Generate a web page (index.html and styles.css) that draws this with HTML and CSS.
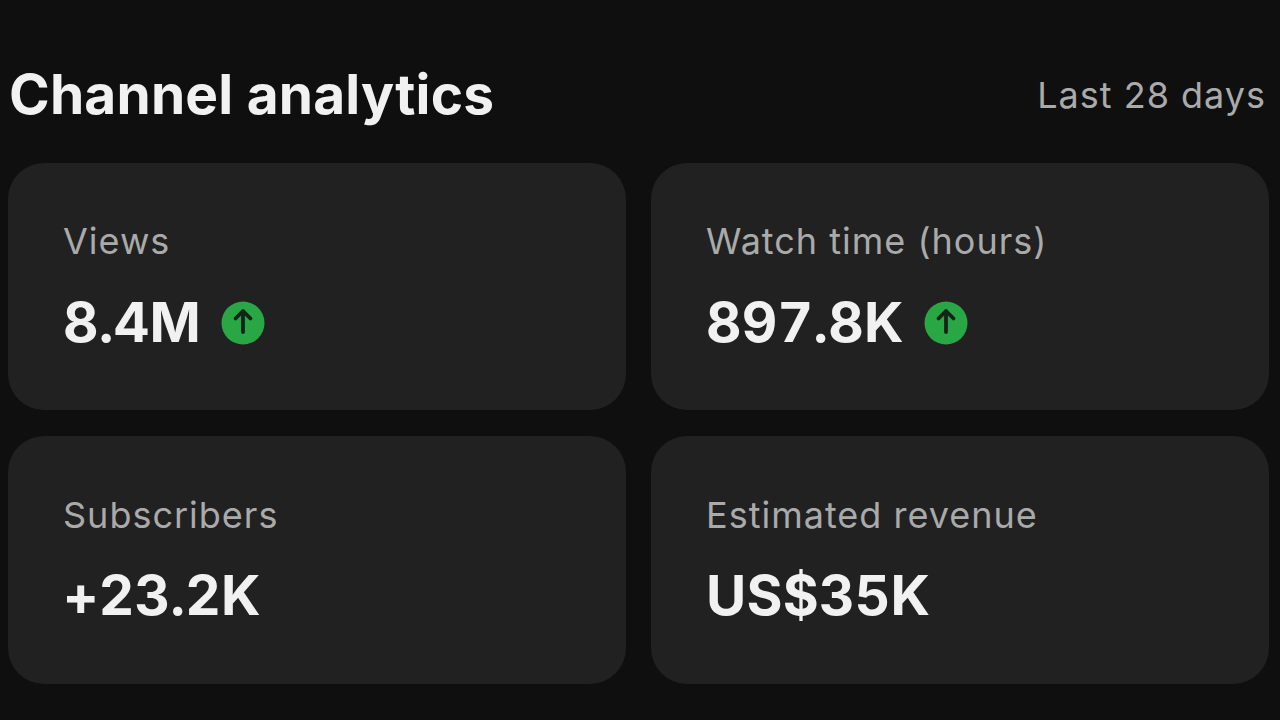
FILE: index.html
```html
<!DOCTYPE html>
<html lang="en">
<head>
    <meta charset="UTF-8">
    <title>Channel analytics</title>
    <link rel="stylesheet" href="styles.css">
</head>
<body>
    <header class="top">
        <h1>Channel analytics</h1>
        <span class="period">Last 28 days</span>
    </header>
    <main class="stats">
        <section class="card">
            <p class="label">Views</p>
            <div class="value">
                <span>8.4M</span>
                <svg class="trend" viewBox="0 0 44 44" aria-hidden="true">
                    <circle cx="22" cy="22" r="21.5" fill="#2aa745"/>
                    <path d="M22 31V10M14.5 17.5L22 10l7.5 7.5" fill="none" stroke="#14231a" stroke-width="3.8" stroke-linecap="round" stroke-linejoin="round"/>
                </svg>
            </div>
        </section>
        <section class="card">
            <p class="label">Watch time (hours)</p>
            <div class="value">
                <span>897.8K</span>
                <svg class="trend" viewBox="0 0 44 44" aria-hidden="true">
                    <circle cx="22" cy="22" r="21.5" fill="#2aa745"/>
                    <path d="M22 31V10M14.5 17.5L22 10l7.5 7.5" fill="none" stroke="#14231a" stroke-width="3.8" stroke-linecap="round" stroke-linejoin="round"/>
                </svg>
            </div>
        </section>
        <section class="card lower">
            <p class="label">Subscribers</p>
            <div class="value"><span>+23.2K</span></div>
        </section>
        <section class="card lower">
            <p class="label">Estimated revenue</p>
            <div class="value"><span>US$35K</span></div>
        </section>
    </main>
</body>
</html>
```

FILE: styles.css
```css
body {
    margin: 0;
    height: 720px;
    overflow: hidden;
    background-color: #0f0f0f;
    font-family: Inter, "Liberation Sans", sans-serif;
}
.top {
    display: flex;
    justify-content: space-between;
    align-items: center;
    height: 163px;
    padding: 24px 14px 0 9px;
    box-sizing: border-box;
}
.top h1 {
    margin: 0;
    font-size: 55px;
    font-weight: 700;
    letter-spacing: 0.2px;
    color: #f1f1f1;
}
.period {
    margin-top: 2px;
    font-size: 36px;
    letter-spacing: 1px;
    color: #aaaaaa;
}
.stats {
    display: grid;
    grid-template-columns: 618px 618px;
    grid-template-rows: 247px 248px;
    column-gap: 25px;
    row-gap: 26px;
    padding-left: 8px;
}
.card {
    background-color: #212121;
    border-radius: 36px;
    padding: 56px 55px 0;
}
.card.lower {
    padding-top: 57px;
}
.label {
    margin: 0;
    font-size: 36px;
    line-height: 44px;
    letter-spacing: 1px;
    color: #aaaaaa;
}
.value {
    display: flex;
    align-items: center;
    gap: 20px;
    margin-top: 29px;
    font-size: 55px;
    line-height: 60px;
    font-weight: 700;
    font-variant-numeric: tabular-nums;
    letter-spacing: 0.2px;
    color: #f1f1f1;
}
.lower .value {
    margin-top: 28px;
}
.trend {
    width: 44px;
    height: 44px;
    margin-top: 2px;
}
```
